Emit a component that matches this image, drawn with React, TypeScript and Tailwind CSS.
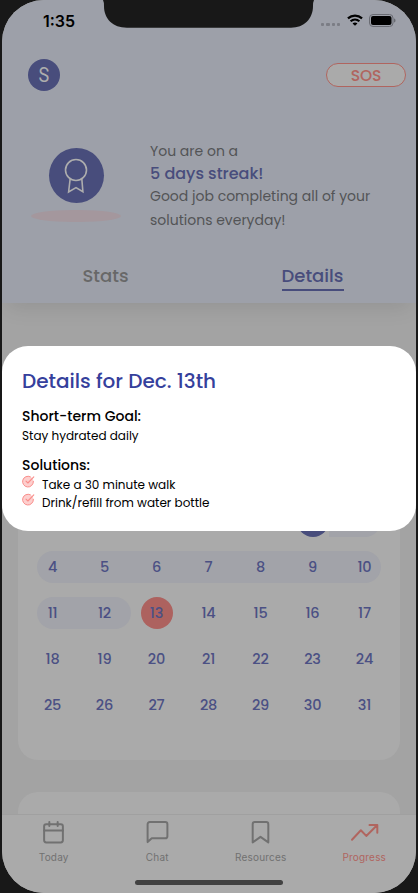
import React from "react";

const weeks: (number | null)[][] = [
  [null, null, null, null, 1, 2, 3],
  [4, 5, 6, 7, 8, 9, 10],
  [11, 12, 13, 14, 15, 16, 17],
  [18, 19, 20, 21, 22, 23, 24],
  [25, 26, 27, 28, 29, 30, 31],
];

const poppins = "font-[Poppins,Inter,sans-serif]";

function Notch() {
  return (
    <svg className="absolute left-[99px] top-0 z-30" width="216" height="28" viewBox="0 0 216 28" fill="#181818">
      <path d="M2 0H213Q212 2 212 6C212 19 203 27.7 190 27.7H26C12 27.7 3 19 3 6Q3 2 2 0Z" />
    </svg>
  );
}

function StatusBar() {
  return (
    <div className="flex h-[42px] items-start justify-between pl-[41px] pr-[20px]">
      <span className="mt-[11px] w-[34px] font-[Inter,sans-serif] text-[16px] font-semibold leading-5 text-black">
        1:35
      </span>
      <div className="mt-[14px] flex items-start">
        <div className="mr-[7px] mt-[9px] flex gap-[2px]">
          {[0, 1, 2, 3].map((i) => (
            <span key={i} className="size-[3.2px] rounded-[1px] bg-[#7b7d85]" />
          ))}
        </div>
        <svg width="16" height="12" viewBox="0 0 17 12" className="mr-[6px]" fill="none" stroke="#000" strokeWidth="2.3">
          <path d="M1 4.3C5.3.3 11.7.3 16 4.3" />
          <path d="M3.8 7.3c2.8-2.5 6.6-2.5 9.4 0" />
          <path d="M8.5 12 5.9 9.6c1.5-1.3 3.7-1.3 5.2 0Z" fill="#000" stroke="none" />
        </svg>
        <svg width="27" height="13" viewBox="0 0 27 13">
          <rect x=".5" y=".5" width="23.5" height="12" rx="3.5" fill="none" stroke="#696b72" />
          <rect x="2" y="2" width="20.5" height="9" rx="2" fill="#000" />
          <path d="M25 4.5c2 .6 2 3.4 0 4Z" fill="#696b72" />
        </svg>
      </div>
    </div>
  );
}

function Medal() {
  return (
    <div className="flex w-[90px] flex-col items-center">
      <div className="flex size-[55px] items-center justify-center rounded-full bg-[#484d7c]">
        <svg width="24" height="36" viewBox="0 0 24 36" fill="none" stroke="#adadad" strokeWidth="1.6">
          <circle cx="12" cy="12" r="10.5" />
          <path d="M6.2 20.6 4.6 34 12 29.6 18.9 33.8 17.8 20.6" />
        </svg>
      </div>
      <div className="mt-[7px] h-[12px] w-[90px] rounded-[42px/6px] bg-[#a4979d]" />
    </div>
  );
}

function Header() {
  return (
    <header className="z-10 h-[303px] shrink-0 bg-[#9da0a9] shadow-[0_10px_20px_-6px_rgba(0,0,0,0.1)]">
      <StatusBar />
      <div className="mt-[17px] flex h-8 items-center justify-between pl-[26px] pr-[10px]">
        <div className="flex size-8 items-center justify-center rounded-full bg-[#484d7c] font-[Roboto,sans-serif] text-[20px] text-[#adadad]">
          <span className="scale-x-90">S</span>
        </div>
        <div className="flex h-6 w-20 items-center justify-center rounded-full border-[1.5px] border-[#b0655f] bg-[#aaa] pt-[2px] text-[15.5px] font-medium tracking-[-0.1px] text-[#b0655f]">
          SOS
        </div>
      </div>
      <div className="flex h-[153px] pl-[29px]">
        <div className="pt-[57px]">
          <Medal />
        </div>
        <div className="ml-[29px] whitespace-nowrap pt-[49px] text-[14px] leading-[23px] text-[#535456]">
          <p>You are on a</p>
          <p className="text-[16px] font-medium leading-[22px] text-[#484d7c]">5 days streak!</p>
          <p className="leading-[23px]">Good job completing all of your</p>
          <p className="leading-[25px]">solutions everyday!</p>
        </div>
      </div>
      <nav className="grid grid-cols-2 pt-[20px] text-[18px] font-medium leading-6">
        <div className="flex justify-center text-[#686868]">Stats</div>
        <div className="flex justify-center">
          <span className="flex h-[27px] w-[62px] justify-center border-b-2 border-[#484d7c] text-[#484d7c]">Details</span>
        </div>
      </nav>
    </header>
  );
}

function Calendar() {
  return (
    <section className="mx-4 mt-[52px] h-[405px] shrink-0 rounded-[20px] bg-[#aaa] pl-[9px] pt-[150px]">
      {weeks.map((week, w) => (
        <div key={w} className="grid h-[46px] grid-cols-[repeat(7,52px)] grid-rows-[32px]">
          {w === 0 && <i className="col-start-6 col-end-8 row-start-1 ml-[42px] mr-[10px] rounded-r-full bg-[#a2a3a9]" />}
          {w === 1 && <i className="col-start-1 col-end-8 row-start-1 ml-[10px] mr-[10px] rounded-full bg-[#a2a3a9]" />}
          {w === 2 && <i className="col-start-1 col-end-3 row-start-1 ml-[10px] rounded-full bg-[#a2a3a9]" />}
          {week.map((day, d) => (
            <span
              key={d}
              style={{ gridColumnStart: d + 1 }}
              className="row-start-1 flex items-center justify-center text-[14.5px] font-medium tracking-[-0.2px] text-[#4b5084]"
            >
              <b
                className={`flex size-8 items-center justify-center rounded-full pr-px pt-[2px] font-medium ${
                  day === 13 ? "bg-[#ad625f]" : day === 2 ? "bg-[#484d7c]" : ""
                }`}
              >
                {day}
              </b>
            </span>
          ))}
        </div>
      ))}
    </section>
  );
}

function Check() {
  return (
    <svg width="13" height="13" viewBox="0 0 13 13" fill="none" stroke="#f98d8a" strokeLinecap="round" strokeLinejoin="round">
      <circle cx="6" cy="6.5" r="5.4" fill="#fdcfce" stroke="none" />
      <path d="M11.4 6.3A5.4 5.4 0 1 1 8.3 1.7" />
      <path d="M4 6.2 5.9 8 11.8 1.9" strokeWidth="1.1" />
    </svg>
  );
}

function Modal() {
  return (
    <div className="absolute left-0 top-[346px] z-20 h-[185px] w-[414px] whitespace-nowrap rounded-[26px] bg-white pl-5 pt-[20px] text-black">
      <h2 className="text-[20px] font-medium leading-[30px] text-[#35409c]">Details for Dec. 13th</h2>
      <h3 className="mt-[10px] text-[14px] font-medium leading-[21px]">Short-term Goal:</h3>
      <p className="text-[12px] leading-[18px]">Stay hydrated daily</p>
      <h3 className="mt-[10px] text-[14px] font-medium leading-[21px]">Solutions:</h3>
      <ul className="-mt-px text-[12px] leading-[18px]">
        {["Take a 30 minute walk", "Drink/refill from water bottle"].map((t) => (
          <li key={t} className="flex h-[18px] gap-[7px]">
            <Check />
            <span className="pt-px">{t}</span>
          </li>
        ))}
      </ul>
    </div>
  );
}

const tabs = [
  {
    label: "Today",
    icon: (
      <>
        <rect x="3" y="4" width="18" height="17.5" rx="2" />
        <path d="M8 1.8v4M16 1.8v4M3 10h18" />
      </>
    ),
  },
  { label: "Chat", icon: <path d="M21.5 15.5a2 2 0 0 1-2 2H6.5L2.5 21.2V4a2 2 0 0 1 2-2h15a2 2 0 0 1 2 2z" /> },
  { label: "Resources", icon: <path d="m19.5 21.5-7.5-5.3-7.5 5.3V4a2 2 0 0 1 2-2h11a2 2 0 0 1 2 2z" /> },
  { label: "Progress", icon: <path d="M0 19 8.5 9.8l5.2 5.5L24 5M16.8 4.8h7.5v7.4" /> },
];

function TabBar() {
  return (
    <footer className="absolute bottom-0 left-0 z-10 h-[79px] w-[414px] border-t border-[#a0a0a0] bg-[#aaa]">
      <div className="grid grid-cols-4 pt-[5px] font-[Inter,sans-serif]">
        {tabs.map((t) => (
          <div key={t.label} className={`flex flex-col items-center ${t.label === "Progress" ? "text-[#b0655f]" : "text-[#717171]"}`}>
            <svg
              className="overflow-visible"
              width="25"
              height="25"
              viewBox="0 0 24 24"
              fill="none"
              stroke="currentColor"
              strokeWidth="1.9"
              strokeLinecap="round"
              strokeLinejoin="round"
            >
              {t.icon}
            </svg>
            <span className="mt-[6px] text-[10px] leading-3 tracking-[0.2px]">{t.label}</span>
          </div>
        ))}
      </div>
      <div className="mx-auto mt-[17px] h-[5px] w-[148px] rounded-full bg-[#424242]" />
    </footer>
  );
}

export default function App() {
  return (
    <div className={`h-[893px] w-[418px] overflow-hidden bg-[#181818] px-[2px] ${poppins}`}>
      <div className="relative flex h-[893px] flex-col overflow-hidden rounded-[42px] bg-[#a3a3a3]">
        <Header />
        <Calendar />
        <section className="mx-4 mt-8 h-20 shrink-0 rounded-[20px] bg-[#aaa]" />
        <Modal />
        <TabBar />
        <Notch />
      </div>
    </div>
  );
}
